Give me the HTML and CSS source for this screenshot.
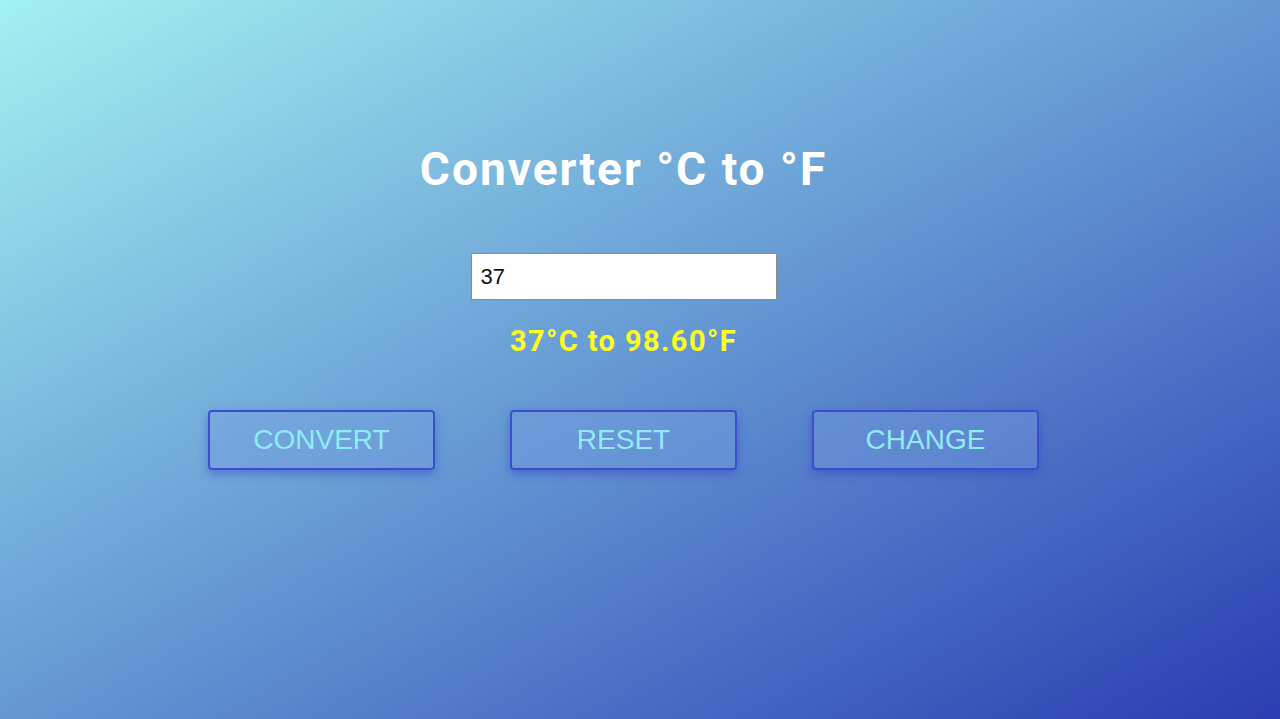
FILE: index.html
```html
<!DOCTYPE html>
<html lang="en">
<head>
<meta charset="utf-8">
<title>Converter °C to °F</title>
<link rel="stylesheet" href="styles.css">
</head>
<body>
<main class="app">
  <h1 class="title">Converter °C to °F</h1>
  <input class="field" type="text" value="37">
  <p class="result">37°C to 98.60°F</p>
  <div class="actions">
    <button class="btn">CONVERT</button>
    <button class="btn">RESET</button>
    <button class="btn">CHANGE</button>
  </div>
</main>
</body>
</html>
```
FILE: styles.css
```css
html, body {
  margin: 0;
  height: 100%;
}
body {
  background: linear-gradient(to bottom right, #a3f1f1 0%, #6aa1d6 45%, #2b3db2 100%);
  font-family: Roboto, "Liberation Sans", sans-serif;
  overflow: hidden;
}
.app {
  width: 1247px;
  display: flex;
  flex-direction: column;
  align-items: center;
  padding-top: 139px;
}
.title {
  margin: 0;
  color: #fff;
  font-size: 46px;
  font-weight: 700;
  letter-spacing: 2px;
  line-height: 60px;
}
.field {
  margin-top: 54px;
  width: 306px;
  height: 47px;
  box-sizing: border-box;
  border: 1px solid #8a8a8a;
  padding: 0 9px;
  font-family: "Liberation Sans", Arial, sans-serif;
  font-size: 22px;
  color: #111;
  background: #fff;
  outline: none;
}
.result {
  margin: 21px 0 0;
  color: #ffff1e;
  font-size: 29px;
  font-weight: 700;
  letter-spacing: 1.4px;
  line-height: 40px;
}
.actions {
  margin-top: 49px;
  display: flex;
  gap: 75px;
}
.btn {
  width: 227px;
  height: 60px;
  box-sizing: border-box;
  border: 2px solid #3b4fcc;
  border-radius: 4px;
  background: rgba(120, 160, 225, 0.4);
  box-shadow: 0 4px 10px rgba(40, 60, 200, 0.45);
  color: #8eecf5;
  font-family: "Liberation Sans", Arial, sans-serif;
  font-size: 28px;
  cursor: pointer;
}
```
